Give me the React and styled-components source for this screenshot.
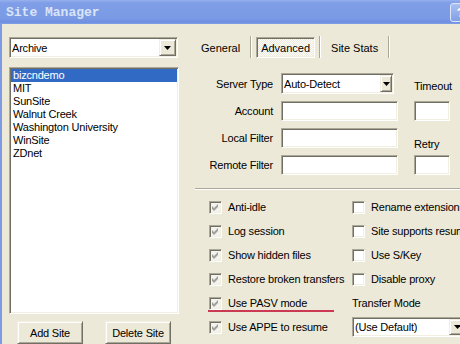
import React from 'react';
import styled, { createGlobalStyle, css } from 'styled-components';

const GlobalStyle = createGlobalStyle`
  html, body { margin: 0; padding: 0; background: #ece9d8; overflow: hidden; }
  body { font-family: "Liberation Sans", Arial, sans-serif; font-size: 11px; letter-spacing: -0.2px; color: #000; }
  * { box-sizing: border-box; }
`;

const sunken = css`
  border: 1px solid;
  border-color: #aca899 #fff #fff #aca899;
  box-shadow: inset 1px 1px 0 #716f64, inset -1px -1px 0 #f1efe2;
`;

const raised = css`
  border: 1px solid;
  border-color: #f1efe2 #716f64 #716f64 #f1efe2;
  box-shadow: inset 1px 1px 0 #fff, inset -1px -1px 0 #aca899;
`;

const Window = styled.div`
  width: 474px;
  height: 344px;
  display: flex;
  flex-direction: column;
  background: #ece9d8;
`;

const TitleBar = styled.div`
  height: 24px;
  flex-shrink: 0;
  display: flex;
  align-items: center;
  justify-content: space-between;
  padding: 0 3px 0 6px;
  background: linear-gradient(to bottom, #98b1ee 0%, #7f9ee7 12%, #7b9ae5 75%, #6f8fe0 92%, #809fe6 100%);
`;

const Title = styled.span`
  font-family: "Liberation Mono", "DejaVu Sans Mono", monospace;
  font-weight: bold;
  font-size: 13px;
  letter-spacing: 0;
  color: #d9e4f8;
`;

const HelpButton = styled.div`
  width: 21px;
  height: 19px;
  border: 1px solid #dde6fb;
  border-radius: 3px;
  background: linear-gradient(to bottom, #a9c0f2, #819fe6);
  color: #fff;
  font-weight: bold;
  font-size: 13px;
  display: flex;
  align-items: center;
  justify-content: center;
`;

const Body = styled.div`
  flex: 1;
  display: flex;
  gap: 12px;
  border-left: 2px solid #7c9be4;
  padding: 12px 0 0 7px;
  overflow: hidden;
`;

const LeftColumn = styled.div`
  width: 170px;
  flex-shrink: 0;
  display: flex;
  flex-direction: column;
`;

const Combo = styled.div`
  ${sunken}
  width: ${p => p.$w}px;
  height: ${p => p.$h}px;
  flex-shrink: 0;
  background: #fff;
  display: flex;
  align-items: stretch;
  padding: 1px;
  margin-top: ${p => p.$mt || 0}px;
`;

const ComboValue = styled.div`
  flex: 1;
  padding-left: 1px;
  display: flex;
  align-items: center;
  white-space: nowrap;
  overflow: hidden;
`;

const DropButton = styled.div`
  ${raised}
  width: ${p => p.$w}px;
  flex-shrink: 0;
  background: #ece9d8;
  display: flex;
  align-items: center;
  justify-content: center;
`;

const Arrow = () => (
  <svg width="7" height="4" viewBox="0 0 7 4">
    <path d="M0 0H7L3.5 4Z" fill="#000" />
  </svg>
);

const SiteList = styled.div`
  ${sunken}
  margin-top: 9px;
  height: 251px;
  background: #fff;
  padding: 1px;
`;

const SiteRow = styled.div`
  height: 13px;
  line-height: 13px;
  padding-left: 2px;
  white-space: nowrap;
  background: ${p => (p.$selected ? '#316ac5' : 'transparent')};
  color: ${p => (p.$selected ? '#fff' : '#000')};
`;

const ButtonRow = styled.div`
  display: flex;
  justify-content: space-between;
  padding: 0 8px;
  margin-top: 7px;
`;

const PushButton = styled.div`
  ${raised}
  width: 66px;
  height: 23px;
  background: #ece9d8;
  display: flex;
  align-items: center;
  justify-content: center;
`;

const RightColumn = styled.div`
  flex: 1;
  display: flex;
  flex-direction: column;
`;

const TabBar = styled.div`
  display: flex;
  height: 22px;
`;

const TabCell = styled.div`
  display: flex;
  align-items: flex-end;
  padding: 0 4px;
  border-right: 1px solid #aca899;
  box-shadow: 1px 0 0 #fff;
  margin-right: 1px;
`;

const Tab = styled.div`
  height: 21px;
  padding: 0 5px;
  display: flex;
  align-items: center;
  letter-spacing: 0;
  border: 1px solid transparent;
  ${p =>
    p.$active &&
    css`
      ${sunken}
      padding: 0 4px;
      background-color: #f6f5ef;
      background-image: repeating-conic-gradient(#fff 0 25%, #ece9d8 0 50%);
      background-size: 2px 2px;
    `}
`;

const Form = styled.div`
  display: flex;
  margin-top: 15px;
`;

const FieldGrid = styled.div`
  display: grid;
  grid-template-columns: 82px 117px;
  grid-template-rows: 21px 20px 20px 20px;
  column-gap: 8px;
  row-gap: 7px;
`;

const FieldLabel = styled.span`
  justify-self: end;
  align-self: center;
  white-space: nowrap;
`;

const TextInput = styled.div`
  ${sunken}
  width: 117px;
  height: 20px;
  background: #fff;
`;

const SideColumn = styled.div`
  display: flex;
  flex-direction: column;
  margin-left: 16px;
`;

const SideLabel = styled.span`
  line-height: 13px;
  margin-top: ${p => p.$mt}px;
`;

const SideInput = styled(TextInput)`
  width: 36px;
  margin-top: ${p => p.$mt}px;
`;

const Separator = styled.div`
  margin: 13px 0 0 4px;
  border-top: 1px solid #aca899;
  border-bottom: 1px solid #fff;
`;

const OptionGrid = styled.div`
  display: grid;
  grid-template-columns: 143px auto;
  grid-auto-rows: 24px;
  margin-top: 5px;
  padding-left: 18px;
`;

const OptionItem = styled.div`
  position: relative;
  display: flex;
  align-items: center;
  gap: 6px;
  white-space: nowrap;
`;

const Box = styled.span`
  ${sunken}
  width: 13px;
  height: 13px;
  flex-shrink: 0;
  background: ${p => (p.$disabled ? '#f4f3ee' : '#fff')};
  display: flex;
  align-items: center;
  justify-content: center;
`;

const Annotation = styled.span`
  position: absolute;
  left: -1px;
  top: 19px;
  width: 126px;
  height: 2px;
  background: #cb3a52;
`;

const Check = () => (
  <svg width="7" height="7" viewBox="0 0 7 7">
    <path d="M0 2L2 4L6 0V3L2 7L0 5Z" fill="#a3a199" />
  </svg>
);

const CheckOption = ({ label, checked, disabled, marked }) => (
  <OptionItem>
    <Box $disabled={disabled}>{checked && <Check />}</Box>
    <span>{label}</span>
    {marked && <Annotation />}
  </OptionItem>
);

const sites = ['bizcndemo', 'MIT', 'SunSite', 'Walnut Creek', 'Washington University', 'WinSite', 'ZDnet'];
const leftOptions = ['Anti-idle', 'Log session', 'Show hidden files', 'Restore broken transfers', 'Use PASV mode', 'Use APPE to resume'];
const rightOptions = ['Rename extensions', 'Site supports resume', 'Use S/Key', 'Disable proxy'];

export default function App() {
  return (
    <>
      <GlobalStyle />
      <Window>
        <TitleBar>
          <Title>Site Manager</Title>
          <HelpButton>?</HelpButton>
        </TitleBar>
        <Body>
          <LeftColumn>
            <Combo $w={169} $h={21} $mt={1}>
              <ComboValue>Archive</ComboValue>
              <DropButton $w={17}><Arrow /></DropButton>
            </Combo>
            <SiteList>
              {sites.map((s, i) => (
                <SiteRow key={s} $selected={i === 0}>{s}</SiteRow>
              ))}
            </SiteList>
            <ButtonRow>
              <PushButton>Add Site</PushButton>
              <PushButton>Delete Site</PushButton>
            </ButtonRow>
          </LeftColumn>
          <RightColumn>
            <TabBar>
              <TabCell><Tab>General</Tab></TabCell>
              <TabCell><Tab $active>Advanced</Tab></TabCell>
              <TabCell><Tab>Site Stats</Tab></TabCell>
            </TabBar>
            <Form>
              <FieldGrid>
                <FieldLabel>Server Type</FieldLabel>
                <Combo $w={113} $h={21}>
                  <ComboValue>Auto-Detect</ComboValue>
                  <DropButton $w={12}><Arrow /></DropButton>
                </Combo>
                <FieldLabel>Account</FieldLabel>
                <TextInput />
                <FieldLabel>Local Filter</FieldLabel>
                <TextInput />
                <FieldLabel>Remote Filter</FieldLabel>
                <TextInput />
              </FieldGrid>
              <SideColumn>
                <SideLabel $mt={7}>Timeout</SideLabel>
                <SideInput $mt={8} />
                <SideLabel $mt={17}>Retry</SideLabel>
                <SideInput $mt={4} />
              </SideColumn>
            </Form>
            <Separator />
            <OptionGrid>
              {leftOptions.map((label, i) => (
                <React.Fragment key={label}>
                  <CheckOption label={label} checked disabled marked={i === 4} />
                  {i < 4 && <CheckOption label={rightOptions[i]} />}
                  {i === 4 && <OptionItem>Transfer Mode</OptionItem>}
                  {i === 5 && (
                    <OptionItem>
                      <Combo $w={115} $h={20}>
                        <ComboValue>(Use Default)</ComboValue>
                        <DropButton $w={16}><Arrow /></DropButton>
                      </Combo>
                    </OptionItem>
                  )}
                </React.Fragment>
              ))}
            </OptionGrid>
          </RightColumn>
        </Body>
      </Window>
    </>
  );
}
